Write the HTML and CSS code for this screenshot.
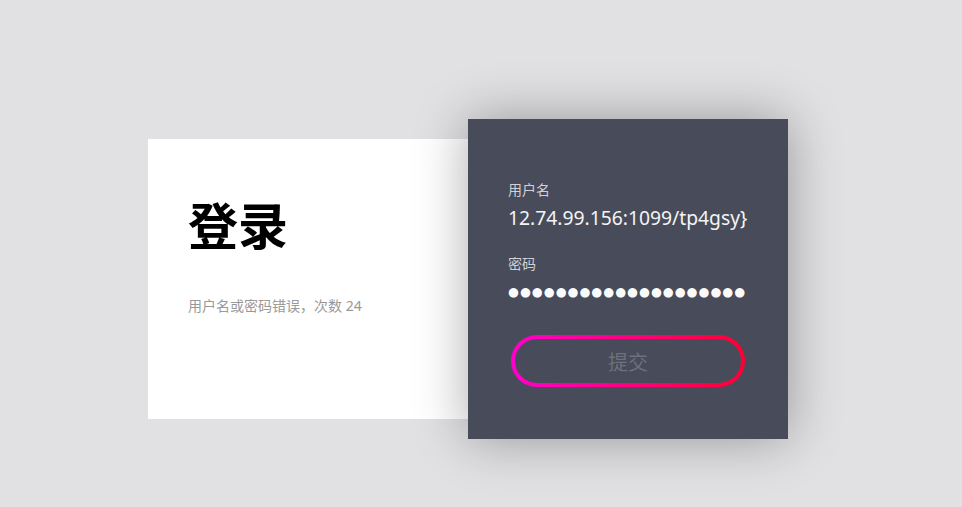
FILE: index.html
```html
<!DOCTYPE html>
<html lang="zh">
<head>
<meta charset="utf-8">
<title>登录</title>
<link rel="stylesheet" href="styles.css">
</head>
<body>
<main class="stage">
  <section class="info">
    <h1 class="title">登录</h1>
    <p class="error">用户名或密码错误，次数 24</p>
  </section>
  <form class="panel">
    <label class="label">用户名</label>
    <div class="value">12.74.99.156:1099/tp4gsy}</div>
    <label class="label label-pw">密码</label>
    <div class="dots">●●●●●●●●●●●●●●●●●●●●</div>
    <button type="button" class="submit">提交</button>
  </form>
</main>
</body>
</html>
```
FILE: styles.css
```css
html, body {
  margin: 0;
  padding: 0;
  background: #e1e1e4;
  font-family: "Noto Sans", "Noto Sans CJK SC", sans-serif;
}
.stage {
  display: flex;
  align-items: flex-start;
  box-sizing: border-box;
  min-height: 100vh;
  padding: 119px 0 0 148px;
}
.info {
  margin-top: 20px;
  width: 320px;
  height: 280px;
  box-sizing: border-box;
  background: #fff;
  padding: 54px 40px 0;
}
.title {
  margin: 0;
  font-family: "Noto Sans CJK SC", sans-serif;
  font-size: 50px;
  line-height: 60px;
  font-weight: 700;
  color: #000;
}
.error {
  margin: 43px 0 0;
  font-size: 14px;
  line-height: 20px;
  color: #999;
}
.panel {
  width: 320px;
  height: 320px;
  box-sizing: border-box;
  background: #484b5a;
  box-shadow: 0 0 50px rgba(0, 0, 0, 0.33);
  padding: 61px 40px 0;
  display: flex;
  flex-direction: column;
  margin: 0;
}
.label {
  font-family: "Noto Sans CJK SC", sans-serif;
  font-size: 14px;
  line-height: 18px;
  color: #d0d0d5;
}
.label-pw {
  margin-top: 23px;
}
.value {
  margin-top: 7px;
  font-size: 19.3px;
  line-height: 26px;
  color: #f4f4f4;
  white-space: nowrap;
}
.dots {
  margin-top: 10px;
  font-family: "DejaVu Sans", sans-serif;
  font-size: 12.5px;
  line-height: 20px;
  letter-spacing: 1px;
  color: #fafafa;
  white-space: nowrap;
}
.submit {
  align-self: center;
  margin-top: 33px;
  width: 234px;
  height: 52px;
  border: 4px solid transparent;
  border-radius: 26px;
  background: linear-gradient(#484b5a, #484b5a) padding-box,
              linear-gradient(90deg, #ff00cc, #ff0033) border-box;
  font-family: "Noto Sans CJK SC", sans-serif;
  font-size: 20px;
  color: #6e707c;
  padding: 0;
}
```
